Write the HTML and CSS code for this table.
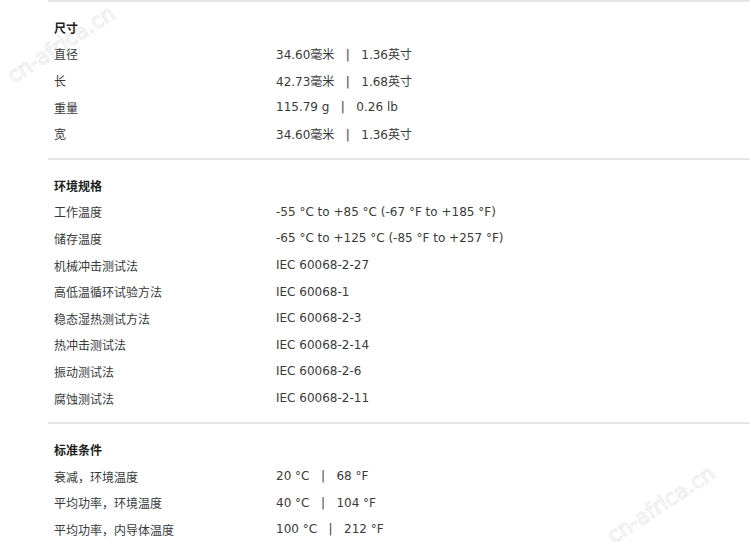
FILE: index.html
```html
<!DOCTYPE html>
<html lang="zh">
<head>
<meta charset="utf-8">
<link rel="stylesheet" href="styles.css">
</head>
<body>
<div class="wm wm-a">cn-africa.cn</div>
<div class="wm wm-b">cn-africa.cn</div>
<div class="page">
  <section class="group">
    <div class="head">尺寸</div>
    <div class="row"><span class="k">直径</span><span class="v">34.60毫米 &nbsp; | &nbsp; 1.36英寸</span></div>
    <div class="row"><span class="k">长</span><span class="v">42.73毫米 &nbsp; | &nbsp; 1.68英寸</span></div>
    <div class="row"><span class="k">重量</span><span class="v">115.79 g &nbsp; | &nbsp; 0.26 lb</span></div>
    <div class="row"><span class="k">宽</span><span class="v">34.60毫米 &nbsp; | &nbsp; 1.36英寸</span></div>
  </section>
  <section class="group">
    <div class="head">环境规格</div>
    <div class="row"><span class="k">工作温度</span><span class="v">-55 °C to +85 °C (-67 °F to +185 °F)</span></div>
    <div class="row"><span class="k">储存温度</span><span class="v">-65 °C to +125 °C (-85 °F to +257 °F)</span></div>
    <div class="row"><span class="k">机械冲击测试法</span><span class="v">IEC 60068-2-27</span></div>
    <div class="row"><span class="k">高低温循环试验方法</span><span class="v">IEC 60068-1</span></div>
    <div class="row"><span class="k">稳态湿热测试方法</span><span class="v">IEC 60068-2-3</span></div>
    <div class="row"><span class="k">热冲击测试法</span><span class="v">IEC 60068-2-14</span></div>
    <div class="row"><span class="k">振动测试法</span><span class="v">IEC 60068-2-6</span></div>
    <div class="row"><span class="k">腐蚀测试法</span><span class="v">IEC 60068-2-11</span></div>
  </section>
  <section class="group">
    <div class="head">标准条件</div>
    <div class="row"><span class="k">衰减，环境温度</span><span class="v">20 °C &nbsp; | &nbsp; 68 °F</span></div>
    <div class="row"><span class="k">平均功率，环境温度</span><span class="v">40 °C &nbsp; | &nbsp; 104 °F</span></div>
    <div class="row"><span class="k">平均功率，内导体温度</span><span class="v">100 °C &nbsp; | &nbsp; 212 °F</span></div>
  </section>
</div>
</body>
</html>
```
FILE: styles.css
```css
html, body {
  margin: 0;
  padding: 0;
  background: #ffffff;
}
body {
  position: relative;
  width: 750px;
  height: 560px;
  overflow: hidden;
  font-family: "DejaVu Sans", "Noto Sans CJK SC", sans-serif;
  font-size: 12px;
  color: #3a3a3a;
}
.page {
  position: relative;
  z-index: 1;
  margin-left: 48px;
}
.group {
  border-top: 2px solid #e6e6e6;
  padding: 12px 0 11px 6px;
}
.head, .row {
  height: 26.6px;
  display: flex;
  align-items: center;
}
.head {
  font-family: "Noto Sans CJK SC", sans-serif;
  font-size: 12px;
  font-weight: bold;
  color: #1e1e1e;
}
.k {
  width: 222px;
  flex: none;
  font-family: "Noto Sans CJK SC", sans-serif;
  font-size: 12px;
  color: #3a3a3a;
}
.v {
  white-space: pre;
  font-family: "DejaVu Sans", "Noto Sans CJK SC", sans-serif;
  font-size: 12px;
  color: #3a3a3a;
}
.wm {
  position: absolute;
  z-index: 0;
  font-family: "DejaVu Sans", sans-serif;
  font-size: 21px;
  color: transparent;
  -webkit-text-stroke: 1px #ececec;
  transform: rotate(-33deg);
  transform-origin: left bottom;
  white-space: nowrap;
  pointer-events: none;
}
.wm-a {
  left: 16px;
  top: 64px;
}
.wm-b {
  left: 616px;
  top: 524px;
}
```
